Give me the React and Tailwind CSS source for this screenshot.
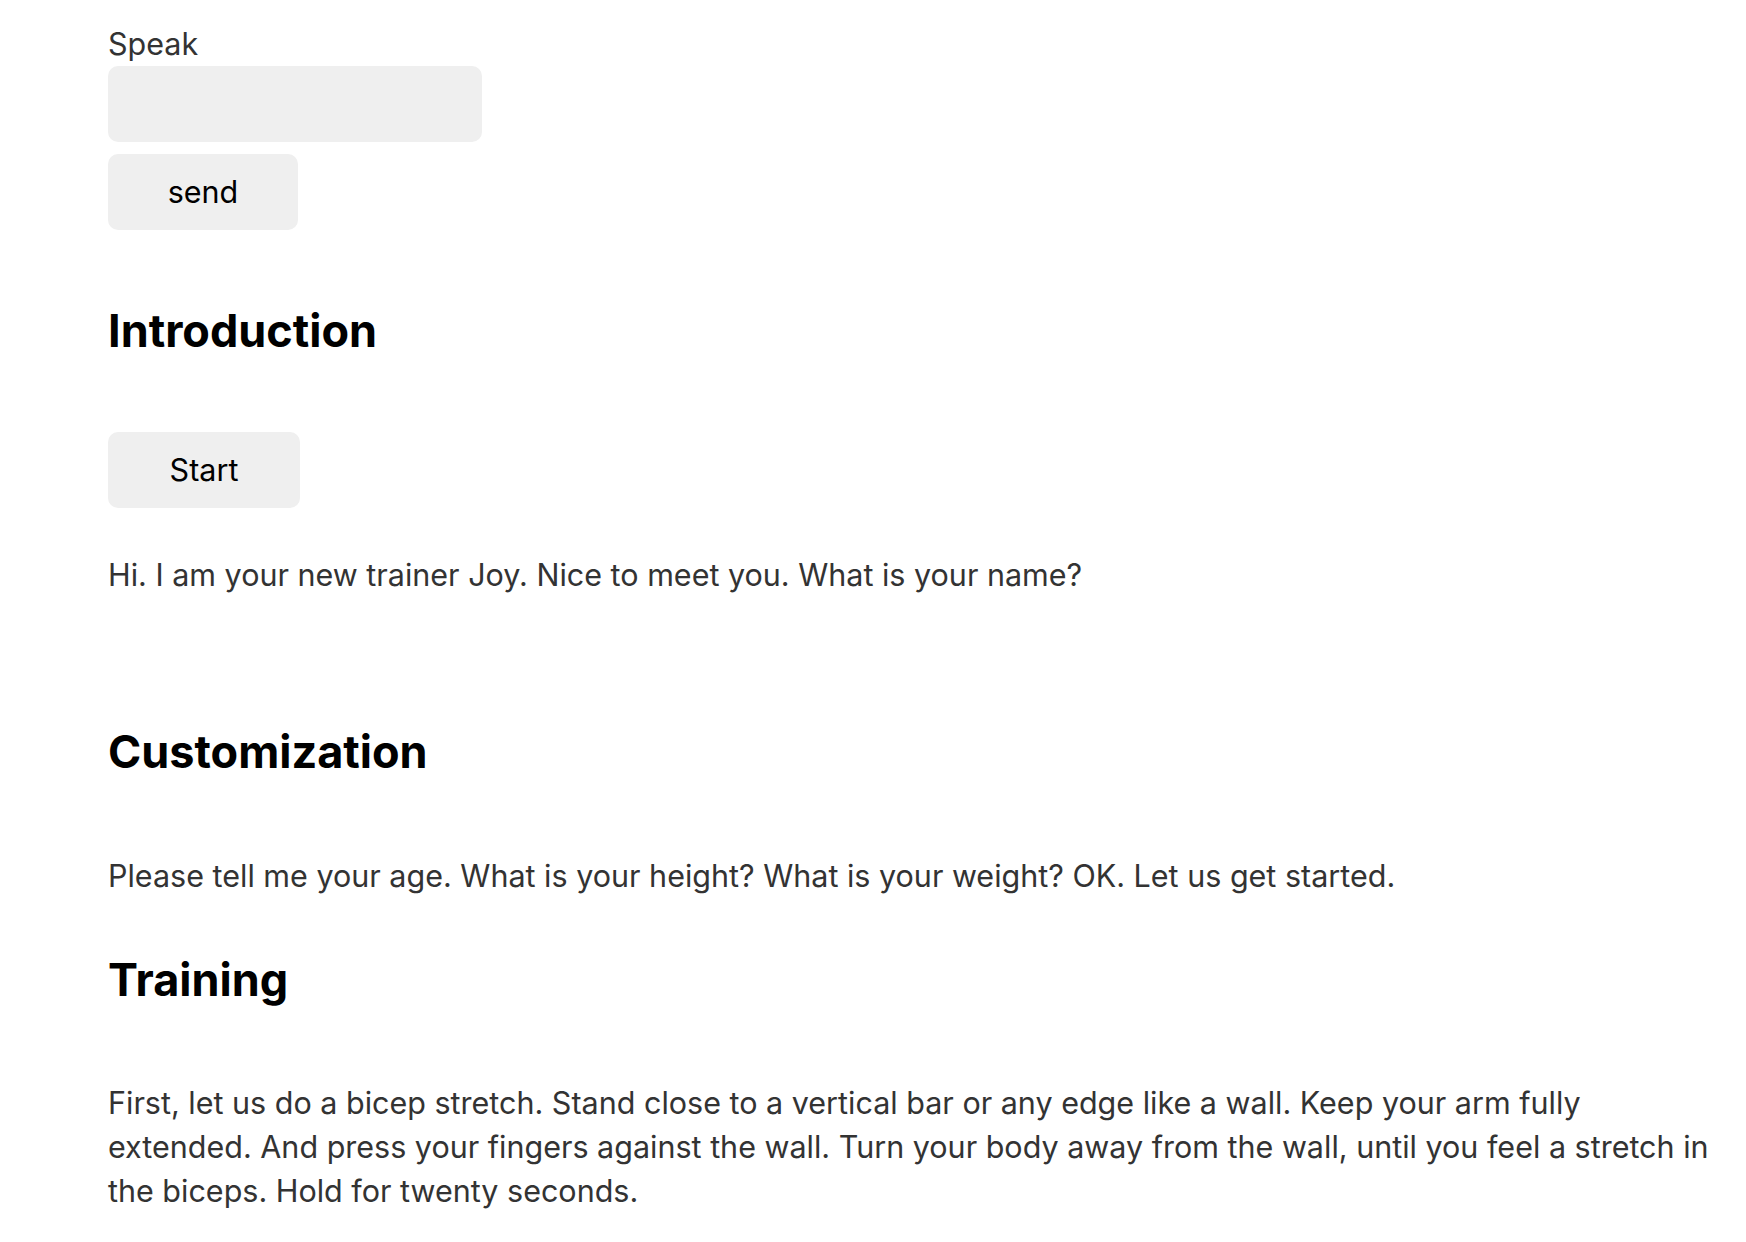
import React from "react";

export default function App() {
  const body = "text-[30.5px] leading-[44px] text-[#333333]";
  const btn =
    "h-[76px] rounded-[10px] bg-[#efefef] text-[30.5px] leading-[44px] text-black flex items-center justify-center";
  const h2 = "text-[45px] leading-[56px] font-bold text-black";
  return (
    <div
      className="min-h-[1242px] bg-white pl-[108px] pr-[20px] pt-[22px]"
      style={{ fontFamily: "Inter, 'Noto Sans', sans-serif" }}
    >
      <div className={body}>Speak</div>
      <div className="h-[76px] w-[374px] rounded-[10px] bg-[#efefef]" />
      <button className={`${btn} mt-[12px] w-[190px]`}>send</button>

      <h2 className={`${h2} mt-[73px]`}>Introduction</h2>
      <button className={`${btn} mt-[73px] w-[192px]`}>Start</button>
      <p className={`${body} mt-[45px]`}>
        Hi. I am your new trainer Joy. Nice to meet you. What is your name?
      </p>

      <h2 className={`${h2} mt-[127px]`}>Customization</h2>
      <p className={`${body} mt-[74px]`}>
        Please tell me your age. What is your height? What is your weight? OK. Let us get started.
      </p>

      <h2 className={`${h2} mt-[54px]`}>Training</h2>
      <p className={`${body} mt-[73px]`}>
        First, let us do a bicep stretch. Stand close to a vertical bar or any edge like a wall. Keep
        your arm fully extended. And press your fingers against the wall. Turn your body away from
        the wall, until you feel a stretch in the biceps. Hold for twenty seconds.
      </p>
    </div>
  );
}
